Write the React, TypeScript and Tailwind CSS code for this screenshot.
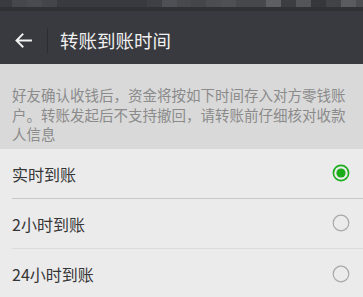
import { useState } from "react";

const mosaic = [
  "w-[12px] bg-[#3a3b40]",
  "w-[15px] bg-[#46474c]",
  "w-[15px] bg-[#4a4b50]",
  "w-[15px] bg-[#44454a]",
  "w-[90px] bg-[#393a3f]",
  "w-[15px] bg-[#3f4045]",
  "w-[15px] bg-[#4f5055]",
  "w-[14px] bg-[#48494d]",
  "w-[15px] bg-[#45464a]",
  "w-[15px] bg-[#4c4d51]",
  "w-[15px] bg-[#4f5054]",
  "w-[30px] bg-[#47484c]",
  "w-[15px] bg-[#5e5f63]",
  "w-[15px] bg-[#3c3d41]",
  "w-[15px] bg-[#545559]",
  "w-[15px] bg-[#36373b]",
  "w-[15px] bg-[#424347]",
  "w-[15px] bg-[#5a5b5f]",
  "w-[7px] bg-[#4c4d51]",
];

const options = ["实时到账", "2小时到账", "24小时到账"];

export default function App() {
  const [selected, setSelected] = useState(0);

  return (
    <div
      className="w-[363px] h-[297px] overflow-hidden bg-[#ebebeb]"
      style={{ fontFamily: '"Noto Sans CJK SC", "Noto Sans", sans-serif' }}
    >
      {/* blurred status bar */}
      <div className="flex h-[7px]">
        {mosaic.map((c, i) => (
          <div key={i} className={`shrink-0 h-full ${c}`} />
        ))}
      </div>
      <div className="h-[4px] bg-[#303135]" />

      <header className="flex h-[53px] items-center bg-[#393a3f] pt-[6px]">
        <div className="flex w-[47px] justify-center">
          <svg viewBox="0 0 18 16" className="h-[15px] w-[17px] text-[#f2f2f2]">
            <path
              d="M17 8H2M8 1.5 1.5 8 8 14.5"
              fill="none"
              stroke="currentColor"
              strokeWidth="2"
              strokeLinecap="square"
            />
          </svg>
        </div>
        <div className="h-[25px] w-px bg-[#2c2d31]" />
        <h1 className="ml-[12px] text-[18.5px] text-[#f0f0f0]">转账到账时间</h1>
      </header>

      <p className="bg-[#d9d9d9] px-3 pt-[21px] pb-[5px] text-[14.5px] leading-[19.5px] text-[#8b8b8b]">
        好友确认收钱后，资金将按如下时间存入对方零钱账户。转账发起后不支持撤回，请转账前仔细核对收款人信息
      </p>

      <ul className="pl-3">
        {options.map((label, i) => (
          <li
            key={label}
            onClick={() => setSelected(i)}
            className={`flex h-[50px] items-center pr-3 ${
              i === 0 ? "border-b border-[#c9c9c9]" : i === 1 ? "border-b border-[#dcdcdc]" : ""
            }`}
          >
            <span className="mt-[1px] flex-1 text-[16px] text-[#353535]">{label}</span>
            <Radio checked={selected === i} />
          </li>
        ))}
      </ul>
    </div>
  );
}

function Radio({ checked }: { checked: boolean }) {
  return (
    <svg viewBox="0 0 18 18" className="mr-[1px] h-[18px] w-[18px]">
      {checked ? (
        <>
          <circle cx="9" cy="9" r="7.6" fill="none" stroke="#1aad19" strokeWidth="1.6" />
          <circle cx="9" cy="9" r="4.6" fill="#1aad19" />
        </>
      ) : (
        <circle cx="9" cy="9" r="7.8" fill="none" stroke="#a9a9a9" strokeWidth="1.2" />
      )}
    </svg>
  );
}
